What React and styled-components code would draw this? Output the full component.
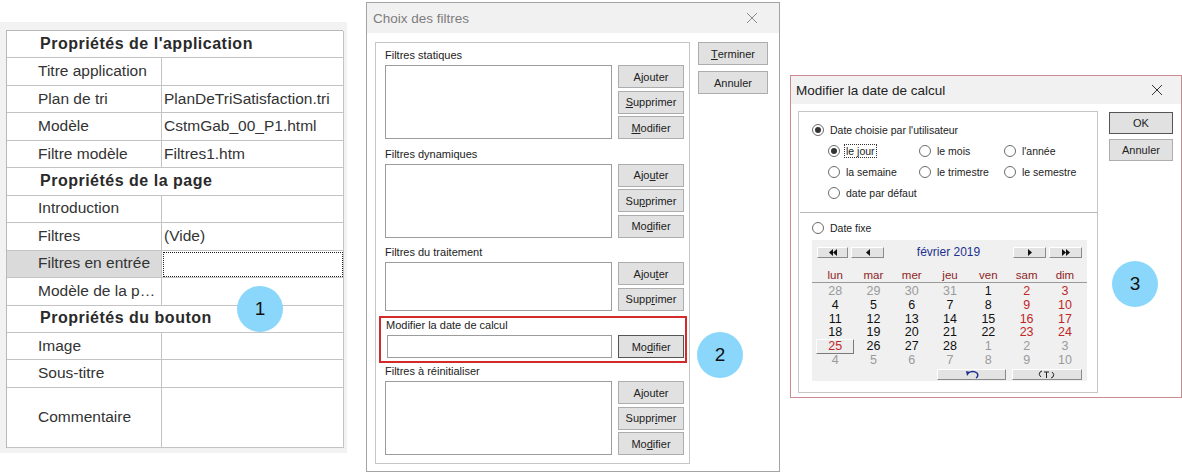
import React from "react";
import styled, { createGlobalStyle } from "styled-components";

const GlobalStyle = createGlobalStyle`
  body {
    margin: 0;
    background: #ffffff;
    font-family: "Liberation Sans", Arial, sans-serif;
  }
  * { box-sizing: border-box; }
`;

const props1 = [
  { head: "Propriétés de l'application" },
  { label: "Titre application", value: "" },
  { label: "Plan de tri", value: "PlanDeTriSatisfaction.tri" },
  { label: "Modèle", value: "CstmGab_00_P1.html" },
  { label: "Filtre modèle", value: "Filtres1.htm" },
  { head: "Propriétés de la page" },
  { label: "Introduction", value: "" },
  { label: "Filtres", value: "(Vide)" },
  { label: "Filtres en entrée", value: "", selected: true },
  { label: "Modèle de la p…", value: "" },
  { head: "Propriétés du bouton" },
  { label: "Image", value: "" },
  { label: "Sous-titre", value: "" },
  { label: "Commentaire", value: "", tall: true },
];

function Access({ text, k }) {
  if (k == null) return text;
  return (
    <>
      {text.slice(0, k)}
      <u>{text[k]}</u>
      {text.slice(k + 1)}
    </>
  );
}

function CloseIcon({ color }) {
  return (
    <svg width="12" height="12" viewBox="0 0 12 12">
      <path d="M1 1 L11 11 M11 1 L1 11" stroke={color} strokeWidth="1" fill="none" />
    </svg>
  );
}

function Section({ title, height, buttons }) {
  return (
    <>
      <SectionLabel>{title}</SectionLabel>
      <SectionRow>
        <ListBox $h={height} />
        <ButtonCol>
          {buttons.map((b, i) => (
            <Btn key={i}>
              <Access text={b[0]} k={b[1]} />
            </Btn>
          ))}
        </ButtonCol>
      </SectionRow>
    </>
  );
}

function Radio({ checked, children, focus }) {
  return (
    <RadioItem>
      <RadioDot $checked={checked} />
      <RadioText $focus={focus}>{children}</RadioText>
    </RadioItem>
  );
}

function Tri({ dir }) {
  return dir === "l" ? <polygon points="5,0 5,7 1,3.5" /> : <polygon points="1,0 1,7 5,3.5" />;
}

function NavIcon({ double, dir }) {
  return (
    <svg width={double ? 10 : 6} height="7" viewBox={double ? "0 0 10 7" : "0 0 6 7"} fill="#111">
      <Tri dir={dir} />
      {double && (
        <g transform="translate(4,0)">
          <Tri dir={dir} />
        </g>
      )}
    </svg>
  );
}

const weeks = [
  [[28, "o"], [29, "o"], [30, "o"], [31, "o"], [1, "n"], [2, "w"], [3, "w"]],
  [[4, "n"], [5, "n"], [6, "n"], [7, "n"], [8, "n"], [9, "w"], [10, "w"]],
  [[11, "n"], [12, "n"], [13, "n"], [14, "n"], [15, "n"], [16, "w"], [17, "w"]],
  [[18, "n"], [19, "n"], [20, "n"], [21, "n"], [22, "n"], [23, "w"], [24, "w"]],
  [[25, "s"], [26, "n"], [27, "n"], [28, "n"], [1, "o"], [2, "o"], [3, "o"]],
  [[4, "o"], [5, "o"], [6, "o"], [7, "o"], [8, "o"], [9, "o"], [10, "o"]],
];

const dayNames = ["lun", "mar", "mer", "jeu", "ven", "sam", "dim"];

export default function App() {
  return (
    <>
      <GlobalStyle />
      <Page>
        <PropsPanel>
          <PropGrid>
            {props1.map((p, i) =>
              p.head ? (
                <HeadCell key={i}>{p.head}</HeadCell>
              ) : (
                <React.Fragment key={i}>
                  <LabelCell $selected={p.selected} $tall={p.tall}>
                    {p.label}
                  </LabelCell>
                  <ValueCell $focus={p.selected} $tall={p.tall}>
                    {p.value}
                  </ValueCell>
                </React.Fragment>
              )
            )}
          </PropGrid>
          <Badge $left={237} $top={264}>1</Badge>
        </PropsPanel>

        <FilterDialog>
          <TitleBar $h={30} $muted>
            <span>Choix des filtres</span>
            <CloseBox $right={21}>
              <CloseIcon color="#8a8a8a" />
            </CloseBox>
          </TitleBar>
          <DialogBody $pad="9px 10px 0 8px" $gap={8}>
            <FilterGroup>
              <Section
                title="Filtres statiques"
                height={74}
                buttons={[["Ajouter", 1], ["Supprimer", 0], ["Modifier", 0]]}
              />
              <SectionGap />
              <Section
                title="Filtres dynamiques"
                height={74}
                buttons={[["Ajouter", 3], ["Supprimer", 2], ["Modifier", 2]]}
              />
              <SectionGap />
              <Section
                title="Filtres du traitement"
                height={49}
                buttons={[["Ajouter", 4], ["Supprimer", 4]]}
              />
              <Highlight>
                <SectionLabel>Modifier la date de calcul</SectionLabel>
                <SectionRow>
                  <TextField />
                  <Btn $default>
                    <Access text="Modifier" k={2} />
                  </Btn>
                </SectionRow>
              </Highlight>
              <Section
                title="Filtres à réinitialiser"
                height={74}
                buttons={[["Ajouter"], ["Supprimer", 5], ["Modifier", 2]]}
              />
            </FilterGroup>
            <SideButtons>
              <SideBtn $w={70}>
                <Access text="Terminer" k={0} />
              </SideBtn>
              <SideBtn $w={70}>Annuler</SideBtn>
            </SideButtons>
          </DialogBody>
          <Badge $left={330} $top={329}>2</Badge>
        </FilterDialog>

        <DateDialog>
          <TitleBar $h={28}>
            <span>Modifier la date de calcul</span>
            <CloseBox $right={18}>
              <CloseIcon color="#333" />
            </CloseBox>
          </TitleBar>
          <DialogBody $pad="7px 8px 0 7px" $gap={11}>
            <DateGroup>
              <Radio checked>Date choisie par l'utilisateur</Radio>
              <PeriodGrid>
                <Radio checked focus>le jour</Radio>
                <Radio>le mois</Radio>
                <Radio>l'année</Radio>
                <Radio>la semaine</Radio>
                <Radio>le trimestre</Radio>
                <Radio>le semestre</Radio>
                <Radio>date par défaut</Radio>
              </PeriodGrid>
              <Separator />
              <Radio>Date fixe</Radio>
              <Calendar>
                <CalNav>
                  <NavBtn $w={31}>
                    <NavIcon double dir="l" />
                  </NavBtn>
                  <NavBtn $w={33}>
                    <NavIcon dir="l" />
                  </NavBtn>
                  <MonthTitle>février 2019</MonthTitle>
                  <NavBtn $w={33}>
                    <NavIcon dir="r" />
                  </NavBtn>
                  <NavBtn $w={33}>
                    <NavIcon double dir="r" />
                  </NavBtn>
                </CalNav>
                <DayHead>
                  {dayNames.map((d) => (
                    <DayName key={d}>{d}</DayName>
                  ))}
                </DayHead>
                <DayGrid>
                  {weeks.flat().map(([n, k], i) => (
                    <DayCell key={i} $kind={k}>
                      {n}
                    </DayCell>
                  ))}
                </DayGrid>
                <CalFooter>
                  <NavBtn $w={69}>
                    <svg width="18" height="9" viewBox="0 0 18 9">
                      <path d="M5 3 Q10 0 14 3 Q16 6 13 8" stroke="#1f2f8f" strokeWidth="1.4" fill="none" />
                      <polygon points="3,1 7,2 4,6" fill="#1f2f8f" />
                    </svg>
                  </NavBtn>
                  <NavBtn $w={70}>
                    <svg width="22" height="9" viewBox="0 0 22 9">
                      <path d="M5 7 Q2 5 4 2 L6 1" stroke="#222" strokeWidth="1" fill="none" />
                      <path d="M8 2 H13 M10.5 2 V8" stroke="#222" strokeWidth="1" fill="none" />
                      <path d="M16 2 Q19 4 17 7 L15 8" stroke="#222" strokeWidth="1" fill="none" />
                    </svg>
                  </NavBtn>
                </CalFooter>
              </Calendar>
            </DateGroup>
            <SideButtons $gap={5} $top={1}>
              <SideBtn $w={64} $h={22} $default>OK</SideBtn>
              <SideBtn $w={64} $h={22}>Annuler</SideBtn>
            </SideButtons>
          </DialogBody>
          <Badge $left={321} $top={185}>3</Badge>
        </DateDialog>
      </Page>
    </>
  );
}

const Page = styled.div`
  display: flex;
  align-items: flex-start;
  width: 1182px;
  height: 473px;
  overflow: hidden;
`;

/* ---------- panel 1 : property grid ---------- */

const PropsPanel = styled.div`
  position: relative;
  margin-top: 22px;
  width: 347px;
  height: 431px;
  padding: 8px 4px 0 6px;
  background: #f2f2f2;
`;

const PropGrid = styled.div`
  display: grid;
  grid-template-columns: 155px 182px;
  background: #ffffff;
  border-top: 1px solid #b9b9b9;
  border-left: 1px solid #b9b9b9;
  color: #333;
  font-size: 15.5px;
`;

const BaseCell = styled.div`
  display: flex;
  align-items: center;
  height: ${(p) => (p.$tall ? "60px" : "27.46px")};
  padding-bottom: 1px;
  border-right: 1px solid #c3c3c3;
  border-bottom: 1px solid #c3c3c3;
  white-space: nowrap;
  overflow: hidden;
`;

const HeadCell = styled(BaseCell)`
  grid-column: 1 / -1;
  padding-left: 33px;
  font-size: 16px;
  letter-spacing: 0.5px;
  font-weight: bold;
  color: #2a2a2a;
`;

const LabelCell = styled(BaseCell)`
  padding-left: 31px;
  background: ${(p) => (p.$selected ? "#dadada" : "transparent")};
`;

const ValueCell = styled(BaseCell)`
  padding-left: 2px;
  outline: ${(p) => (p.$focus ? "1px dotted #222" : "none")};
  outline-offset: -2px;
`;

const Badge = styled.div`
  position: absolute;
  left: ${(p) => p.$left}px;
  top: ${(p) => p.$top}px;
  width: 46px;
  height: 46px;
  border-radius: 50%;
  background: #8bd7fb;
  color: #111;
  font-size: 19px;
  display: flex;
  align-items: center;
  justify-content: center;
`;

/* ---------- dialogs ---------- */

const FilterDialog = styled.div`
  position: relative;
  margin: 2px 0 0 19px;
  width: 414px;
  height: 470px;
  border: 1px solid #a3a3a3;
  background: #ffffff;
`;

const DateDialog = styled.div`
  position: relative;
  margin: 75px 0 0 10px;
  width: 392px;
  height: 323px;
  border: 1px solid #c98a90;
  background: #ffffff;
`;

const TitleBar = styled.div`
  position: relative;
  display: flex;
  align-items: center;
  height: ${(p) => p.$h}px;
  padding-left: ${(p) => (p.$muted ? 6 : 5)}px;
  background: #f1f1f1;
  color: ${(p) => (p.$muted ? "#7d7d7d" : "#222")};
  font-size: 13.5px;
`;

const CloseBox = styled.div`
  position: absolute;
  right: ${(p) => p.$right}px;
  top: 50%;
  transform: translateY(-50%);
  display: flex;
`;

const DialogBody = styled.div`
  display: flex;
  align-items: flex-start;
  gap: ${(p) => p.$gap}px;
  padding: ${(p) => p.$pad};
`;

const FilterGroup = styled.div`
  width: 315px;
  height: 422px;
  border: 1px solid #c6c6c6;
  padding: 5px 5px 0 9px;
  display: flex;
  flex-direction: column;
`;

const SectionLabel = styled.div`
  font-size: 11px;
  line-height: 15px;
  color: #222;
  margin-bottom: 2px;
`;

const SectionGap = styled.div`
  height: 7.5px;
`;

const SectionRow = styled.div`
  display: flex;
  gap: 6px;
  align-items: flex-start;
`;

const ListBox = styled.div`
  width: 227px;
  height: ${(p) => p.$h}px;
  border: 1px solid #9c9c9c;
  background: #fff;
`;

const TextField = styled(ListBox)`
  height: 23px;
  margin-left: 1px;
`;

const ButtonCol = styled.div`
  display: flex;
  flex-direction: column;
  gap: 2.5px;
`;

const Btn = styled.div`
  width: 66px;
  height: 23px;
  display: flex;
  align-items: center;
  justify-content: center;
  background: #e1e1e1;
  border: 1px solid ${(p) => (p.$default ? "#555" : "#adadad")};
  font-size: 11px;
  color: #222;
  u { text-decoration-thickness: 1px; text-underline-offset: 1px; }
`;

const Highlight = styled.div`
  margin: 5px -3px 1px -6px;
  padding: 0 1px 3px 5px;
  border: 2px solid #d42a2a;
`;

const SideButtons = styled.div`
  display: flex;
  flex-direction: column;
  gap: ${(p) => p.$gap ?? 6}px;
  margin-top: ${(p) => p.$top ?? 0}px;
`;

const SideBtn = styled(Btn)`
  width: ${(p) => p.$w}px;
  height: ${(p) => p.$h ?? 23}px;
`;

/* ---------- date dialog ---------- */

const DateGroup = styled.div`
  width: 300px;
  height: 282px;
  border: 1px solid #c6c6c6;
  padding: 10px 0 0 13px;
  display: flex;
  flex-direction: column;
`;

const RadioItem = styled.div`
  display: flex;
  align-items: center;
  gap: 5px;
  height: 16px;
  font-size: 10.5px;
  color: #222;
  white-space: nowrap;
`;

const RadioDot = styled.span`
  width: 12px;
  height: 12px;
  flex: none;
  border-radius: 50%;
  border: 1px solid #6c6c6c;
  background: #fff;
  display: flex;
  align-items: center;
  justify-content: center;
  &::after {
    content: "";
    width: 6px;
    height: 6px;
    border-radius: 50%;
    background: ${(p) => (p.$checked ? "#333" : "transparent")};
  }
`;

const RadioText = styled.span`
  outline: ${(p) => (p.$focus ? "1px dotted #333" : "none")};
  padding: 0 1px;
`;

const PeriodGrid = styled.div`
  display: grid;
  grid-template-columns: 91px 85px 1fr;
  grid-auto-rows: 21px;
  align-items: center;
  margin: 2px 0 0 16px;
`;

const Separator = styled.div`
  margin: 9px 0 6px -12px;
  border-top: 1px solid #b8b8b8;
  border-bottom: 1px solid #fff;
`;

const Calendar = styled.div`
  width: 275px;
  height: 141px;
  margin-top: 4px;
  background: #f0f0f0;
  padding-top: 5px;
  display: flex;
  flex-direction: column;
`;

const CalNav = styled.div`
  display: flex;
  align-items: center;
  gap: 3px;
  padding: 0 5px;
`;

const NavBtn = styled.div`
  width: ${(p) => p.$w}px;
  height: 11px;
  display: flex;
  align-items: center;
  justify-content: center;
  background: #e3e3e3;
  border: 1px solid;
  border-color: #fff #8a8a8a #8a8a8a #fff;
`;

const MonthTitle = styled.div`
  flex: 1;
  text-align: center;
  color: #22308f;
  font-size: 12px;
`;

const DayHead = styled.div`
  display: grid;
  grid-template-columns: repeat(7, 38.3px);
  padding-left: 4px;
  margin-top: 9px;
  height: 15px;
  border-bottom: 1px solid #9a9a9a;
`;

const DayName = styled.div`
  text-align: center;
  font-size: 11.5px;
  line-height: 14px;
  color: #8e1f1f;
`;

const dayColor = { o: "#9a9a9a", n: "#111", w: "#c02828", s: "#c02828" };

const DayGrid = styled.div`
  display: grid;
  grid-template-columns: repeat(7, 38.3px);
  grid-auto-rows: 13.8px;
  padding-left: 4px;
  margin-top: 1px;
`;

const DayCell = styled.div`
  display: flex;
  align-items: center;
  justify-content: center;
  font-size: 12.5px;
  color: ${(p) => dayColor[p.$kind]};
  ${(p) =>
    p.$kind === "s" &&
    `
    background: #ededed;
    border: 1px solid;
    border-color: #fff #7a7a7a #7a7a7a #fff;
    height: 15px;
    align-self: center;
  `}
`;

const CalFooter = styled.div`
  display: flex;
  justify-content: flex-end;
  gap: 6px;
  padding-right: 5px;
  margin-top: 2px;
`;
